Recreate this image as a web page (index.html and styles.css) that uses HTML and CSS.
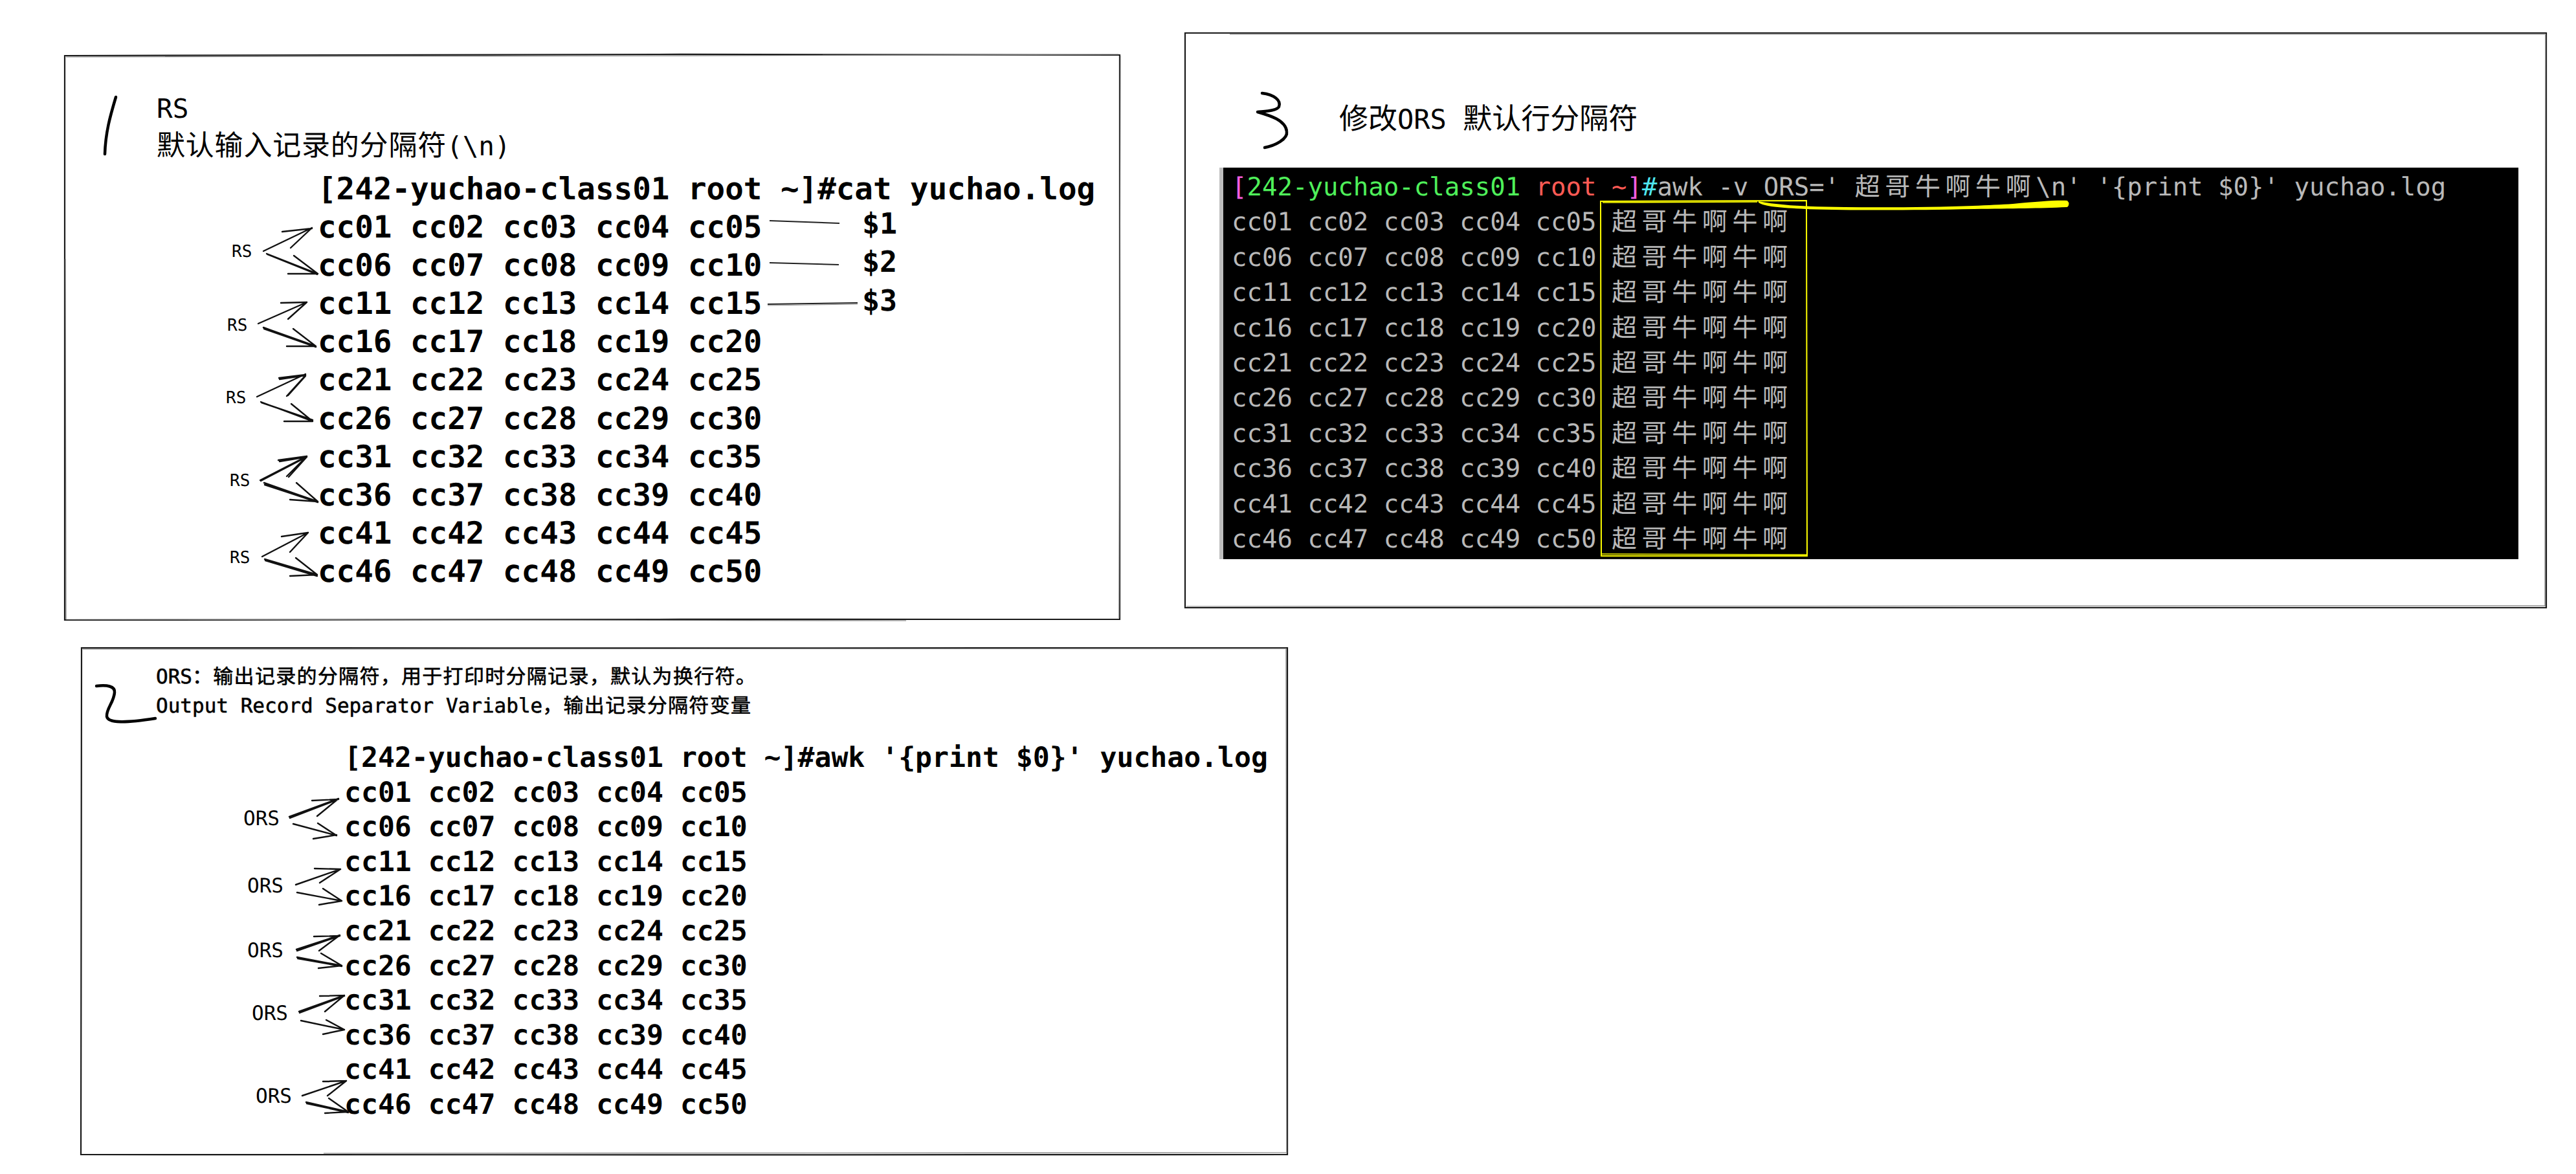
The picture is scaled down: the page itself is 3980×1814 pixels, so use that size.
FILE: index.html
```html
<!DOCTYPE html>
<html lang="zh-CN">
<head>
<meta charset="utf-8">
<title>awk RS ORS</title>
<link rel="stylesheet" href="styles.css">
</head>
<body>
<main class="stage">
  <section class="panel panel-rs">
    <div class="head-rs">RS</div>
    <div class="head-rs"><span class="wide">默认输入记录的分隔符</span>(\n)</div>
    <div class="term term-rs">
      <div>[242-yuchao-class01 root ~]#cat yuchao.log</div>
      <div>cc01 cc02 cc03 cc04 cc05</div>
      <div>cc06 cc07 cc08 cc09 cc10</div>
      <div>cc11 cc12 cc13 cc14 cc15</div>
      <div>cc16 cc17 cc18 cc19 cc20</div>
      <div>cc21 cc22 cc23 cc24 cc25</div>
      <div>cc26 cc27 cc28 cc29 cc30</div>
      <div>cc31 cc32 cc33 cc34 cc35</div>
      <div>cc36 cc37 cc38 cc39 cc40</div>
      <div>cc41 cc42 cc43 cc44 cc45</div>
      <div>cc46 cc47 cc48 cc49 cc50</div>
    </div>
  </section>

  <section class="panel panel-ors">
    <div class="head-ors"><span class="lat">ORS</span>：输出记录的分隔符，用于打印时分隔记录，默认为换行符。</div>
    <div class="head-ors"><span class="lat">Output Record Separator Variable</span>，输出记录分隔符变量</div>
    <div class="term term-ors">
      <div>[242-yuchao-class01 root ~]#awk '{print $0}' yuchao.log</div>
      <div>cc01 cc02 cc03 cc04 cc05</div>
      <div>cc06 cc07 cc08 cc09 cc10</div>
      <div>cc11 cc12 cc13 cc14 cc15</div>
      <div>cc16 cc17 cc18 cc19 cc20</div>
      <div>cc21 cc22 cc23 cc24 cc25</div>
      <div>cc26 cc27 cc28 cc29 cc30</div>
      <div>cc31 cc32 cc33 cc34 cc35</div>
      <div>cc36 cc37 cc38 cc39 cc40</div>
      <div>cc41 cc42 cc43 cc44 cc45</div>
      <div>cc46 cc47 cc48 cc49 cc50</div>
    </div>
  </section>

  <section class="panel panel-mod">
    <div class="head-mod"><span class="cjk">修改</span>ORS <span class="cjk">默认行分隔符</span></div>
    <pre class="shell"><span class="c-mag">[</span><span class="c-grn">242-yuchao-class01</span> <span class="c-red">root ~</span><span class="c-mag">]</span><span class="c-cyn">#</span>awk -v ORS=' <span class="zh">超哥牛啊牛啊</span>\n' '{print $0}' yuchao.log
cc01 cc02 cc03 cc04 cc05 <span class="zh">超哥牛啊牛啊</span>
cc06 cc07 cc08 cc09 cc10 <span class="zh">超哥牛啊牛啊</span>
cc11 cc12 cc13 cc14 cc15 <span class="zh">超哥牛啊牛啊</span>
cc16 cc17 cc18 cc19 cc20 <span class="zh">超哥牛啊牛啊</span>
cc21 cc22 cc23 cc24 cc25 <span class="zh">超哥牛啊牛啊</span>
cc26 cc27 cc28 cc29 cc30 <span class="zh">超哥牛啊牛啊</span>
cc31 cc32 cc33 cc34 cc35 <span class="zh">超哥牛啊牛啊</span>
cc36 cc37 cc38 cc39 cc40 <span class="zh">超哥牛啊牛啊</span>
cc41 cc42 cc43 cc44 cc45 <span class="zh">超哥牛啊牛啊</span>
cc46 cc47 cc48 cc49 cc50 <span class="zh">超哥牛啊牛啊</span></pre>
  </section>

  <svg class="ink" viewBox="0 0 3980 1814">
    <!-- panel outlines -->
    <g class="edge">
      <path d="M100 86 C 600 84 1200 83 1730 85 L1730 957 C 1200 956 600 958 100 958 Z"/>
      <path class="faint" d="M102 88 C 600 87 1200 86 1728 84 M1731 86 L1729 955 M1400 959 L102 957 M101 400 L102 957"/>
      <path d="M126 1001 C 700 1001 1400 1002 1989 1001 L1989 1784 C 1400 1785 700 1784 125 1784 Z"/>
      <path class="faint" d="M128 1003 L1987 1002 M1987 1003 L1988 1782 M500 1782 L1987 1781"/>
      <path d="M1831 51 C 2300 53 3000 55 3934 51 L3934 939 C 3000 938 2300 939 1831 939 Z"/>
      <path class="faint" d="M1900 53 C 2400 56 3000 57 3932 53 M3933 53 L3932 937 M1833 937 L3932 936"/>
    </g>

    <!-- yellow marks -->
    <path class="mark-box" d="M2473 311 L2791 310 L2792 859 L2474 859 Z"/>
    <path class="mark-box-thin" d="M2476 313 L2715 312 M2474 856 L2791 857"/>
    <path class="mark-fill" d="M2717 311 C 2760 319 2800 319 2850 320 C 2950 321 3050 319 3110 315 C 3150 311 3180 309 3194 310 Q 3199 315 3194 320 C 3150 322 3110 322 3050 323 C 2950 325 2850 325 2790 323 C 2750 321 2725 319 2717 313 Z"/>

    <!-- hand-written numerals -->
    <path class="pen" d="M179 150 C 170 180 163 205 162 238"/>
    <path class="pen" d="M149 1060 C 165 1058 178 1060 177 1070 C 176 1085 164 1095 165 1107 C 167 1118 195 1117 240 1110"/>
    <path class="pen" d="M1950 144 C 1968 146 1980 155 1976 165 C 1972 172 1950 172 1943 173 C 1960 178 1986 185 1988 203 C 1990 215 1970 225 1954 228"/>

    <!-- RS arrows -->
    <g class="arrow">
      <path d="M407 388 L482 352 M436 358 L482 353 M449 383 L482 352"/>
      <path d="M412 392 L491 423 M413 393 L490 424 M454 395 L491 423 M445 423 L491 423"/>
      <path d="M399 500 L474 467 M434 468 L474 467 M445 493 L474 467"/>
      <path d="M407 506 L488 535 M408 508 L488 536 M453 508 L488 535 M443 535 L488 535"/>
      <path d="M397 613 L472 578 M431 584 L472 579 M432 586 L472 580 M443 612 L472 580 M445 611 L472 581"/>
      <path d="M403 621 L483 651 M404 622 L483 649 M450 624 L483 651 M439 651 L483 651"/>
      <path d="M402 742 L474 705 M403 743 L474 706 M430 711 L474 705 M432 713 L474 706 M443 736 L474 705 M446 737 L474 706"/>
      <path d="M408 746 L491 775 M409 749 L491 776 M458 746 L491 775 M448 772 L491 775"/>
      <path d="M405 860 L476 823 M435 829 L476 823 M448 853 L476 823"/>
      <path d="M409 864 L490 888 M410 866 L490 890 M457 862 L490 888 M448 890 L490 888"/>
    </g>
    <g class="leader">
      <path d="M1189 341 L1297 345"/>
      <path d="M1189 406 L1296 409"/>
      <path d="M1186 470 L1325 468"/>
      <path class="leader-echo" d="M1186 472 L1325 470"/>
    </g>

    <!-- ORS arrows -->
    <g class="arrow">
      <path d="M447 1262 L523 1234 M448 1264 L523 1235 M482 1237 L523 1235 M490 1261 L523 1234"/>
      <path d="M453 1273 L520 1291 M491 1272 L520 1291 M484 1296 L520 1290"/>
      <path d="M457 1367 L526 1343 M486 1342 L526 1343 M494 1364 L526 1343"/>
      <path d="M459 1379 L528 1392 M499 1373 L528 1392 M493 1398 L528 1392"/>
      <path d="M458 1467 L525 1445 M459 1469 L525 1446 M485 1447 L525 1446 M493 1469 L525 1445"/>
      <path d="M459 1479 L528 1492 M460 1481 L528 1493 M496 1473 L528 1492 M492 1496 L528 1492"/>
      <path d="M462 1563 L532 1538 M463 1565 L532 1539 M494 1539 L532 1538 M502 1563 L532 1538"/>
      <path d="M465 1577 L532 1591 M504 1576 L532 1591 M499 1598 L532 1591"/>
      <path d="M467 1693 L535 1670 M499 1671 L535 1670 M506 1693 L535 1670"/>
      <path d="M473 1703 L538 1718 M474 1705 L538 1719 M508 1697 L538 1718 M502 1720 L538 1718"/>
    </g>

    <!-- annotations -->
    <g class="tag-rs">
      <text x="358" y="397">RS</text>
      <text x="351" y="511">RS</text>
      <text x="349" y="623">RS</text>
      <text x="355" y="751">RS</text>
      <text x="355" y="870">RS</text>
    </g>
    <g class="tag-ors">
      <text x="376" y="1275">ORS</text>
      <text x="382" y="1379">ORS</text>
      <text x="382" y="1479">ORS</text>
      <text x="389" y="1576">ORS</text>
      <text x="395" y="1704">ORS</text>
    </g>
    <g class="tag-field">
      <text x="1332" y="361">$1</text>
      <text x="1332" y="420">$2</text>
      <text x="1332" y="480">$3</text>
    </g>
  </svg>
</main>
</body>
</html>
```
FILE: styles.css
```css
html, body {
  margin: 0;
  padding: 0;
  background: #fff;
}

.stage {
  position: relative;
  width: 3980px;
  height: 1814px;
  overflow: hidden;
  background: #fff;
  color: #000;
  font-family: "DejaVu Sans Mono", "Noto Sans CJK SC", monospace;
  text-rendering: geometricPrecision;
}

.panel {
  position: absolute;
  box-sizing: border-box;
}

.panel-rs {
  left: 100px;
  top: 84px;
  width: 1630px;
  height: 873px;
  padding: 55px 0 0 142px;
}

.panel-ors {
  left: 125px;
  top: 1001px;
  width: 1864px;
  height: 783px;
  padding: 23px 0 0 116px;
}

.panel-mod {
  left: 1831px;
  top: 51px;
  width: 2103px;
  height: 889px;
  padding: 103px 0 0 53px;
}

.head-rs {
  font-size: 41px;
  line-height: 58px;
  white-space: nowrap;
}

.wide {
  font-size: 44px;
  letter-spacing: 0.8px;
}

.head-ors {
  font-size: 31px;
  line-height: 45px;
  letter-spacing: 1.3px;
  white-space: nowrap;
  -webkit-text-stroke: 0.6px #000;
}

.lat {
  letter-spacing: 0;
}

.head-mod {
  margin-left: 185px;
  margin-bottom: 44px;
  font-size: 42px;
  line-height: 60px;
  white-space: pre;
}

.cjk {
  font-size: 45px;
}

.term {
  display: flex;
  flex-direction: column;
  align-items: flex-start;
  font-weight: 700;
  white-space: pre;
}

.term-rs {
  margin: 8px 0 0 249px;
  font-size: 47.5px;
  line-height: 59.1px;
}

.term-ors {
  margin: 31px 0 0 291px;
  font-size: 43.1px;
  line-height: 53.6px;
}

.shell {
  box-sizing: border-box;
  width: 2007px;
  height: 605px;
  margin: 0;
  padding: 4px 0 0 13px;
  border-left: 6px solid #bdbdbd;
  background: #000;
  color: #b9b9b9;
  font-family: inherit;
  font-size: 39px;
  line-height: 54.4px;
  white-space: pre;
  overflow: hidden;
}

.zh {
  letter-spacing: 7.6px;
}

.c-mag { color: #f45fe0; }
.c-grn { color: #4ff05a; }
.c-red { color: #ff5b55; }
.c-cyn { color: #4fe6ef; }

.ink {
  position: absolute;
  left: 0;
  top: 0;
  width: 3980px;
  height: 1814px;
  pointer-events: none;
}

.edge path {
  fill: none;
  stroke: #1a1a1a;
  stroke-width: 2.2;
}

.edge .faint {
  stroke: #777;
  stroke-width: 1.2;
}

.mark-box {
  fill: none;
  stroke: #ffff00;
  stroke-width: 2;
}

.mark-box-thin {
  fill: none;
  stroke: #ffff00;
  stroke-width: 1.5;
}

.mark-fill {
  fill: #ffff00;
}

.pen {
  fill: none;
  stroke: #000;
  stroke-width: 4.5;
  stroke-linecap: round;
  stroke-linejoin: round;
}

.arrow path {
  fill: none;
  stroke: #111;
  stroke-width: 2.4;
  stroke-linecap: round;
}

.leader path {
  fill: none;
  stroke: #222;
  stroke-width: 2;
}

.leader .leader-echo {
  stroke: #888;
  stroke-width: 1;
}

.tag-rs text {
  font-size: 26px;
}

.tag-ors text {
  font-size: 31px;
}

.tag-field text {
  font-size: 45px;
  font-weight: 700;
}
```
